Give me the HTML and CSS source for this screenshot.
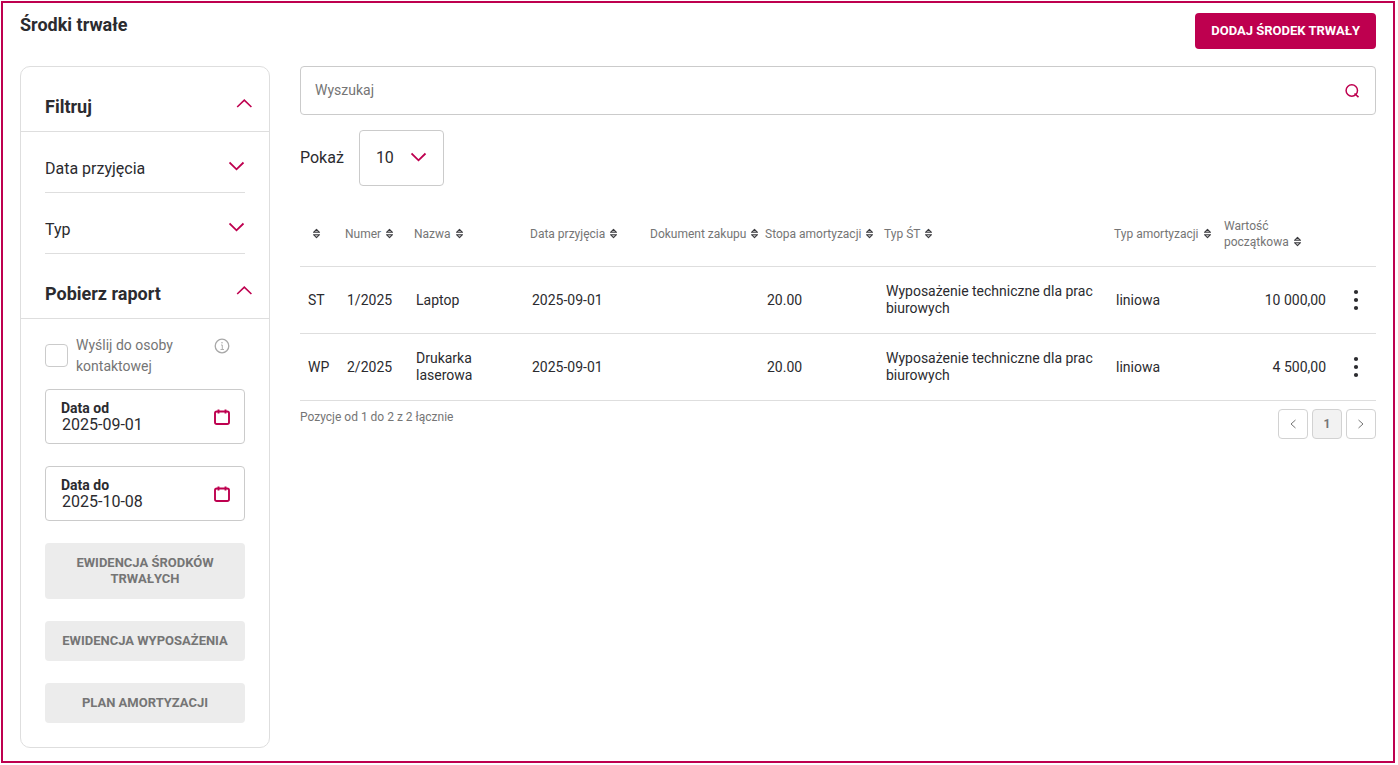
FILE: index.html
```html
<!DOCTYPE html>
<html lang="pl">
<head>
<meta charset="utf-8">
<meta name="viewport" content="width=device-width, initial-scale=1">
<title>Środki trwałe</title>
<link rel="stylesheet" href="styles.css">
</head>
<body>
<svg class="defs" aria-hidden="true">
  <symbol id="chevron-down" viewBox="0 0 16 10"><path d="M.5 1.500 7.500 8.300 14.500 1.500" fill="none" stroke="currentColor" stroke-width="1.800"/></symbol>
  <symbol id="chevron-up" viewBox="0 0 16 10"><path d="M1.200 8 8.300 1.200 15.400 8" fill="none" stroke="currentColor" stroke-width="1.600"/></symbol>
  <symbol id="sort" viewBox="0 0 9 11"><path d="M1.500 4.300 4.500 1.300 7.500 4.300ZM1.500 6.700 4.500 9.700 7.500 6.700Z" fill="#d8d8d8" stroke="#3c3c40" stroke-width="1.100" stroke-linejoin="round"/></symbol>
  <symbol id="calendar" viewBox="0 0 16 16"><path d="M2.800 2.500h10.400q1.800 0 1.800 1.800v8.900q0 1.800-1.800 1.800h-10.400Q1 15 1 13.200v-8.900Q1 2.500 2.800 2.500ZM4.500 .5v4M11.500 .5v4" fill="none" stroke="currentColor" stroke-width="1.900"/></symbol>
  <symbol id="dots" viewBox="0 0 6 22"><circle cx="3" cy="3" r="2.100"/><circle cx="3" cy="11" r="2.100"/><circle cx="3" cy="19" r="2.100"/></symbol>
</svg>
<div class="frame">
  <header class="topbar">
    <h1 class="title">Środki trwałe</h1>
    <button class="btn-primary" type="button">DODAJ ŚRODEK TRWAŁY</button>
  </header>
  <div class="layout">
    <aside class="sidebar">
      <button class="section-head" type="button">Filtruj<svg class="chevron"><use href="#chevron-up"/></svg></button>
      <div class="filters">
        <button class="filter" type="button">Data przyjęcia<svg class="chevron"><use href="#chevron-down"/></svg></button>
        <button class="filter" type="button">Typ<svg class="chevron"><use href="#chevron-down"/></svg></button>
      </div>
      <button class="section-head" type="button">Pobierz raport<svg class="chevron"><use href="#chevron-up"/></svg></button>
      <form class="report">
        <div class="send">
          <input class="check" type="checkbox" id="send">
          <label class="send-label" for="send">Wyślij do osoby kontaktowej</label>
          <svg class="info" viewBox="0 0 16 16"><circle cx="8" cy="8" r="6.800" fill="none" stroke="#a8a8a8" stroke-width="1.300"/><path d="M7 7h1.300v4.500M6.500 11.500h3.500" fill="none" stroke="#b0b0b0"/><circle cx="8" cy="4.700" r=".8" fill="#b0b0b0"/></svg>
        </div>
        <div class="date">
          <div class="date-text">
            <label class="date-label" for="from">Data od</label>
            <input class="date-input" id="from" type="text" value="2025-09-01">
          </div>
          <svg class="cal"><use href="#calendar"/></svg>
        </div>
        <div class="date">
          <div class="date-text">
            <label class="date-label" for="to">Data do</label>
            <input class="date-input" id="to" type="text" value="2025-10-08">
          </div>
          <svg class="cal"><use href="#calendar"/></svg>
        </div>
        <button class="btn-grey" type="button">EWIDENCJA ŚRODKÓW TRWAŁYCH</button>
        <button class="btn-grey" type="button">EWIDENCJA WYPOSAŻENIA</button>
        <button class="btn-grey" type="button">PLAN AMORTYZACJI</button>
      </form>
    </aside>
    <main class="content">
      <div class="search">
        <input class="search-input" type="text" placeholder="Wyszukaj" aria-label="Wyszukaj">
        <svg class="search-icon" viewBox="0 0 16 16"><circle cx="7.800" cy="7.500" r="5.700" fill="none" stroke="currentColor" stroke-width="1.500"/><path d="M10.500 10.500 14.500 14.200" stroke="currentColor" stroke-width="1.600"/></svg>
      </div>
      <div class="length">
        <label class="length-label" for="length">Pokaż</label>
        <div class="select-wrap">
          <select class="select" id="length"><option>10</option><option>25</option><option>50</option></select>
          <svg class="chevron select-arrow"><use href="#chevron-down"/></svg>
        </div>
      </div>
      <table class="assets">
        <colgroup>
          <col class="c-kind"><col class="c-number"><col class="c-name"><col class="c-date"><col class="c-doc"><col class="c-rate"><col><col class="c-amort"><col class="c-value"><col class="c-menu">
        </colgroup>
        <thead>
          <tr>
            <th class="kind-head" aria-label="Rodzaj"><svg class="sort"><use href="#sort"/></svg></th>
            <th>Numer<svg class="sort"><use href="#sort"/></svg></th>
            <th>Nazwa<svg class="sort"><use href="#sort"/></svg></th>
            <th>Data przyjęcia<svg class="sort"><use href="#sort"/></svg></th>
            <th>Dokument zakupu<svg class="sort"><use href="#sort"/></svg></th>
            <th>Stopa amortyzacji<svg class="sort"><use href="#sort"/></svg></th>
            <th>Typ ŚT<svg class="sort"><use href="#sort"/></svg></th>
            <th>Typ amortyzacji<svg class="sort"><use href="#sort"/></svg></th>
            <th>Wartość<br>początkowa<svg class="sort"><use href="#sort"/></svg></th>
            <th></th>
          </tr>
        </thead>
        <tbody>
          <tr>
            <td>ST</td><td>1/2025</td><td>Laptop</td><td>2025-09-01</td><td></td><td>20.00</td>
            <td>Wyposażenie techniczne dla prac biurowych</td><td>liniowa</td><td class="num">10 000,00</td>
            <td class="menu-cell"><button class="menu" type="button" aria-label="Menu"><svg class="dots"><use href="#dots"/></svg></button></td>
          </tr>
          <tr>
            <td>WP</td><td>2/2025</td><td>Drukarka laserowa</td><td>2025-09-01</td><td></td><td>20.00</td>
            <td>Wyposażenie techniczne dla prac biurowych</td><td>liniowa</td><td class="num">4 500,00</td>
            <td class="menu-cell"><button class="menu" type="button" aria-label="Menu"><svg class="dots"><use href="#dots"/></svg></button></td>
          </tr>
        </tbody>
      </table>
      <div class="table-foot">
        <p class="summary">Pozycje od 1 do 2 z 2 łącznie</p>
        <nav class="pager">
          <button class="page" type="button" aria-label="Poprzednia"><svg class="page-arrow" viewBox="0 0 8 10"><path d="M6.500 1 2 5l4.500 4" fill="none" stroke="currentColor"/></svg></button>
          <button class="page page-current" type="button">1</button>
          <button class="page" type="button" aria-label="Następna"><svg class="page-arrow" viewBox="0 0 8 10"><path d="M1.500 1 6 5 1.500 9" fill="none" stroke="currentColor"/></svg></button>
        </nav>
      </div>
    </main>
  </div>
</div>
</body>
</html>
```

FILE: styles.css
```css
* { box-sizing: border-box; }

body {
  margin: 0;
  padding: 1px 3px 2px 1px;
  min-height: 100vh;
  display: flex;
  background: #fff;
  color: #2b2b2f;
  font-family: Roboto, "Liberation Sans", sans-serif;
  font-size: 16px;
}

button, input, select {
  font: inherit;
  color: inherit;
}

button { cursor: pointer; }

svg { display: block; flex: none; }

.defs { position: absolute; width: 0; height: 0; }

.frame {
  flex: 1;
  min-width: 0;
  border: 2px solid #be004f;
  padding: 10px 17px 13px;
}

.topbar {
  display: flex;
  justify-content: space-between;
  align-items: flex-start;
  margin-bottom: 17px;
}

.title {
  margin: 0;
  font-size: 18px;
  line-height: 24px;
  font-weight: 700;
}

.btn-primary {
  height: 36px;
  padding: 0 16px 2px;
  border: 0;
  border-radius: 4px;
  background: #be004f;
  color: #fff;
  font-size: 13px;
  font-weight: 700;
}

.layout {
  display: flex;
  align-items: flex-start;
  gap: 30px;
}

.sidebar {
  flex: none;
  width: 250px;
  border: 1px solid #dedede;
  border-radius: 10px;
}

.section-head {
  display: flex;
  justify-content: space-between;
  align-items: flex-start;
  width: 100%;
  height: 65px;
  padding: 28px 17px 0 24px;
  border: 0;
  border-bottom: 1px solid #dedede;
  background: none;
  font-size: 18px;
  line-height: 24px;
  font-weight: 700;
}

.chevron {
  width: 16px;
  height: 10px;
  color: #be004f;
}

.section-head .chevron { margin-top: 4px; }

.filters { padding: 0 24px; }

.filter {
  display: flex;
  justify-content: space-between;
  align-items: flex-start;
  width: 100%;
  height: 61px;
  padding: 25px 0 0;
  border: 0;
  border-bottom: 1px solid #dedede;
  background: none;
  line-height: 24px;
}

.filter .chevron { margin-top: 4px; }

.report {
  display: flex;
  flex-direction: column;
  gap: 22px;
  padding: 16px 24px 24px;
}

.send {
  display: flex;
  align-items: flex-start;
  margin-bottom: -10px;
}

.check {
  flex: none;
  appearance: none;
  width: 23px;
  height: 23px;
  margin: 9px 8px 0 0;
  border: 1px solid #cbcbcb;
  border-radius: 4px;
}

.send-label {
  flex: 1;
  color: #757575;
  font-size: 14px;
  line-height: 21px;
}

.info {
  width: 16px;
  height: 16px;
  margin: 3px 15px 0 0;
}

.date {
  display: flex;
  align-items: center;
  height: 55px;
  padding: 0 14px 0 15px;
  border: 1px solid #cbcbcb;
  border-radius: 4px;
}

.date-text {
  flex: 1;
  min-width: 0;
}

.date-label {
  display: block;
  font-size: 14px;
  line-height: 16px;
  font-weight: 700;
}

.date-input {
  display: block;
  width: 100%;
  height: 17px;
  padding: 0 1px;
  border: 0;
}

.cal {
  width: 16px;
  height: 16px;
  color: #be004f;
}

.btn-grey {
  min-height: 40px;
  padding: 12px 16px;
  border: 0;
  border-radius: 4px;
  background: #ececec;
  color: #757575;
  font-size: 13px;
  line-height: 16px;
  font-weight: 700;
}

.content { flex: 1; min-width: 0; }

.search { position: relative; }

.search-input {
  display: block;
  width: 100%;
  height: 49px;
  padding: 0 48px 2px 14px;
  border: 1px solid #cbcbcb;
  border-radius: 4px;
  font-size: 14px;
}

.search-input::placeholder { color: #757575; }

.search-icon {
  position: absolute;
  top: 17px;
  right: 16px;
  width: 16px;
  height: 16px;
  color: #be004f;
}

.length {
  display: flex;
  align-items: center;
  gap: 15px;
  margin: 15px 0;
}

.length-label { padding-bottom: 2px; }

.select-wrap { position: relative; }

.select {
  display: block;
  appearance: none;
  width: 85px;
  height: 56px;
  padding: 0 16px 2px;
  border: 1px solid #cbcbcb;
  border-radius: 4px;
  background: #fff;
}

.select-arrow {
  position: absolute;
  top: 22px;
  right: 17px;
  pointer-events: none;
}

.assets {
  width: 100%;
  table-layout: fixed;
  border-collapse: separate;
  border-spacing: 0;
}

.c-kind { width: 39px; }
.c-number { width: 69px; }
.c-name { width: 116px; }
.c-date { width: 120px; }
.c-doc { width: 115px; }
.c-rate { width: 119px; }
.c-amort { width: 110px; }
.c-value { width: 116px; }
.c-menu { width: 42px; }

.assets th {
  padding: 17px 0 16px 6px;
  border-bottom: 1px solid #dedede;
  color: #757575;
  font-size: 12px;
  line-height: 16px;
  font-weight: 400;
  text-align: left;
  white-space: nowrap;
}

.assets .kind-head { padding-left: 8px; }

.assets td {
  padding: 16px 8px;
  border-bottom: 1px solid #dedede;
  font-size: 14px;
  line-height: 17px;
}

.assets .num { text-align: right; }

.assets .menu-cell { padding: 0 10px 0 0; }

.sort {
  display: inline-block;
  width: 9px;
  height: 11px;
  margin-left: 4px;
  vertical-align: -1px;
}

.menu {
  display: block;
  margin-left: auto;
  padding: 4px 7px;
  border: 0;
  background: none;
}

.dots { width: 6px; height: 22px; fill: #2b2b2f; }

.table-foot {
  display: flex;
  justify-content: space-between;
  align-items: flex-start;
  padding-top: 8px;
}

.summary {
  margin: 0;
  color: #757575;
  font-size: 12px;
  line-height: 16px;
}

.pager { display: flex; gap: 4px; }

.page {
  display: flex;
  align-items: center;
  justify-content: center;
  width: 30px;
  height: 30px;
  padding: 0;
  border: 1px solid #d2d2d2;
  border-radius: 4px;
  background: #fff;
  color: #757575;
  font-size: 12px;
}

.page-current { background: #f2f2f2; font-weight: 700; }

.page-arrow { width: 8px; height: 10px; }
```
